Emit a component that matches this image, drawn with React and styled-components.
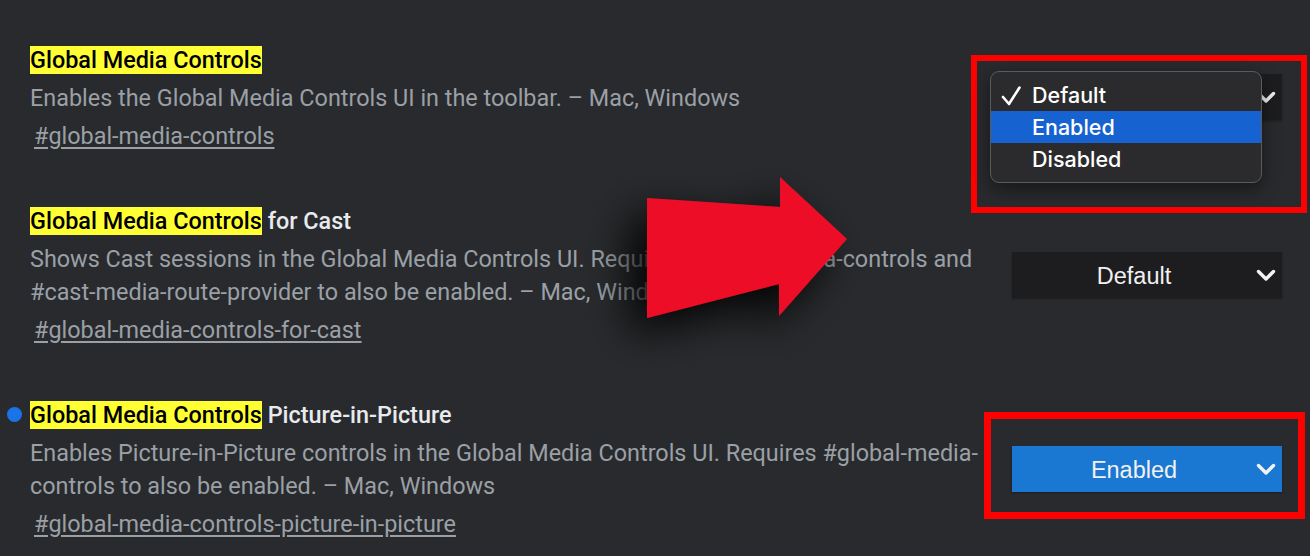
import React from "react";
import styled, { createGlobalStyle } from "styled-components";

const Global = createGlobalStyle`
  html, body { margin: 0; padding: 0; background: #292a2d; }
  body { font-family: Roboto, "Noto Sans", sans-serif; }
`;

const Page = styled.div`
  position: relative;
  box-sizing: border-box;
  width: 1310px;
  height: 556px;
  overflow: hidden;
  background: #292a2d;
  padding: 46px 28px 0 30px;
`;

const Row = styled.div`
  position: relative;
  display: flex;
  align-items: center;
  margin-bottom: 54px;
`;

const Info = styled.div`
  flex: 1;
  min-width: 0;
`;

const Title = styled.div`
  font-size: 23.4px;
  line-height: 28px;
  font-weight: 500;
  color: #e8eaed;
  white-space: nowrap;
  margin-bottom: 8px;
`;

const Highlight = styled.span`
  background: #ffff33;
  color: #000;
`;

const Desc = styled.div`
  font-size: 23.4px;
  line-height: 33px;
  color: #9aa0a6;
  white-space: nowrap;
`;

const Link = styled.a`
  display: block;
  margin: 5px 0 0 4px;
  font-size: 23.4px;
  line-height: 33px;
  color: #9aa0a6;
  text-decoration: underline;
  text-underline-offset: 3px;
  white-space: nowrap;
`;

const Dot = styled.span`
  position: absolute;
  left: -23px;
  top: 6px;
  width: 15px;
  height: 15px;
  border-radius: 50%;
  background: #1a73e8;
`;

const Control = styled.div`
  position: relative;
  flex-shrink: 0;
  width: 270px;
  margin-bottom: 5px;
`;

const SelectBox = styled.div`
  position: relative;
  box-sizing: border-box;
  height: 46px;
  display: flex;
  align-items: center;
  justify-content: center;
  padding: 3px 26px 0 0;
  font-family: "Liberation Sans", Arial, sans-serif;
  font-size: 23.5px;
  color: #f1f1f1;
  background: ${(p) => (p.$active ? "#1a77d2" : "#1d1d1f")};
  box-shadow: 0 1px 2px rgba(0, 0, 0, 0.35);
`;

const Chevron = styled.svg`
  position: absolute;
  right: 6px;
  top: 50%;
  width: 20px;
  height: 13px;
  margin-top: -6px;
`;

const Frame = styled.div`
  position: absolute;
  box-sizing: border-box;
  border: ${(p) => p.$w}px solid #ff0000;
  left: ${(p) => p.$l}px;
  top: ${(p) => p.$t}px;
  right: ${(p) => p.$r}px;
  bottom: ${(p) => p.$b}px;
  pointer-events: none;
`;

const Menu = styled.div`
  position: absolute;
  left: -22px;
  top: -3px;
  width: 272px;
  box-sizing: border-box;
  padding: 7px 0;
  background: #2b2b2d;
  border: 1px solid #5b5b5e;
  border-radius: 9px;
  box-shadow: 0 6px 18px rgba(0, 0, 0, 0.45);
  overflow: hidden;
  z-index: 2;
`;

const MenuItem = styled.div`
  position: relative;
  height: 32px;
  display: flex;
  align-items: center;
  padding-left: 41px;
  font-family: Inter, "Noto Sans", sans-serif;
  font-size: 21.5px;
  font-weight: 500;
  color: #ffffff;
  background: ${(p) => (p.$hover ? "#1662d0" : "transparent")};
`;

const Check = styled.svg`
  position: absolute;
  left: 10px;
  top: 7px;
  width: 20px;
  height: 20px;
`;

const ArrowArt = styled.svg`
  position: absolute;
  left: 500px;
  top: 120px;
  width: 420px;
  height: 280px;
  pointer-events: none;
  z-index: 3;
`;

const ChevronIcon = () => (
  <Chevron viewBox="0 0 20 13">
    <path d="M2.5 2.5 L10 10 L17.5 2.5" fill="none" stroke="#f2f2f2" strokeWidth="3.4" strokeLinecap="round" strokeLinejoin="round" />
  </Chevron>
);

const Select = ({ value, active }) => (
  <SelectBox $active={active}>
    {value}
    <ChevronIcon />
  </SelectBox>
);

export default function App() {
  return (
    <>
      <Global />
      <Page>
        <Row>
          <Info>
            <Title>
              <Highlight>Global Media Controls</Highlight>
            </Title>
            <Desc>Enables the Global Media Controls UI in the toolbar. – Mac, Windows</Desc>
            <Link>#global-media-controls</Link>
          </Info>
          <Control>
            <Select value="Default" />
            <Menu>
              <MenuItem>
                <Check viewBox="0 0 20 20">
                  <path d="M2 11 L8 18 L18.5 1.5" fill="none" stroke="#fff" strokeWidth="2.6" strokeLinecap="round" strokeLinejoin="round" />
                </Check>
                Default
              </MenuItem>
              <MenuItem $hover>Enabled</MenuItem>
              <MenuItem>Disabled</MenuItem>
            </Menu>
            <Frame $w={6.5} $l={-41} $t={-19} $r={-25} $b={-93} />
          </Control>
        </Row>

        <Row>
          <Info>
            <Title>
              <Highlight>Global Media Controls</Highlight> for Cast
            </Title>
            <Desc>
              Shows Cast sessions in the Global Media Controls UI. Requires #global-media-controls and
              <br />
              #cast-media-route-provider to also be enabled. – Mac, Windows
            </Desc>
            <Link>#global-media-controls-for-cast</Link>
          </Info>
          <Control>
            <Select value="Default" />
          </Control>
        </Row>

        <Row>
          <Dot />
          <Info>
            <Title>
              <Highlight>Global Media Controls</Highlight> Picture-in-Picture
            </Title>
            <Desc>
              Enables Picture-in-Picture controls in the Global Media Controls UI. Requires #global-media-
              <br />
              controls to also be enabled. – Mac, Windows
            </Desc>
            <Link>#global-media-controls-picture-in-picture</Link>
          </Info>
          <Control>
            <Select value="Enabled" active />
            <Frame $w={7.5} $l={-28} $t={-34} $r={-23} $b={-27} />
          </Control>
        </Row>

        <ArrowArt viewBox="500 120 420 280">
          <defs>
            <filter id="arrowShadow" x="-50%" y="-50%" width="200%" height="200%">
              <feGaussianBlur in="SourceAlpha" stdDeviation="22" />
              <feOffset dx="-16" dy="16" result="b" />
              <feComponentTransfer>
                <feFuncA type="linear" slope="0.95" />
              </feComponentTransfer>
              <feMerge>
                <feMergeNode />
                <feMergeNode in="SourceGraphic" />
              </feMerge>
            </filter>
          </defs>
          <polygon
            points="647,198 780,207 780,177 847,239 779,316 779,284 647,318"
            fill="#ee0f28"
            filter="url(#arrowShadow)"
          />
        </ArrowArt>
      </Page>
    </>
  );
}
